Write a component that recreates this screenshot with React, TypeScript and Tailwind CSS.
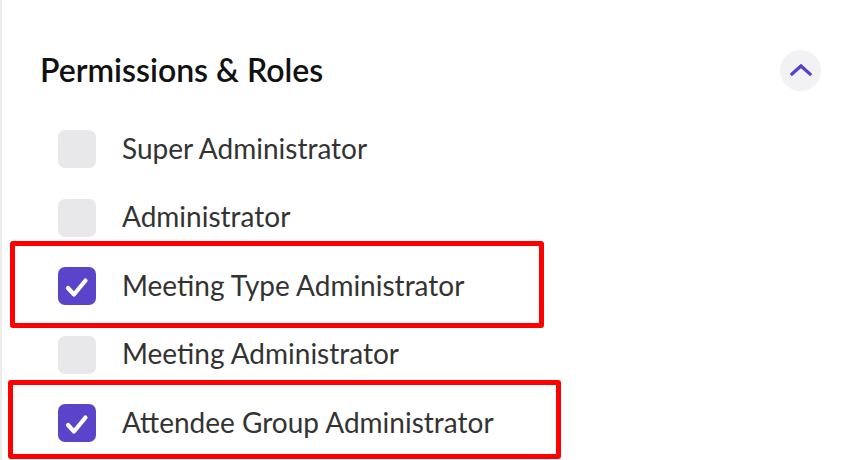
import React from "react";

const roles = [
  { label: "Super Administrator", checked: false },
  { label: "Administrator", checked: false },
  { label: "Meeting Type Administrator", checked: true },
  { label: "Meeting Administrator", checked: false },
  { label: "Attendee Group Administrator", checked: true },
];

function Check() {
  return (
    <svg width="38" height="38" viewBox="0 0 38 38" fill="none">
      <path d="M10 21 L16 27.5 L27.5 13.5" stroke="white" strokeWidth="4.2" strokeLinecap="round" strokeLinejoin="round" />
    </svg>
  );
}

export default function App() {
  return (
    <div
      className="relative w-[857px] h-[460px] overflow-hidden bg-white border-l-2 border-[#ececec]"
      style={{ fontFamily: "Lato, 'Open Sans', sans-serif" }}
    >
      <div className="flex items-center justify-between pl-[38px] pr-[36px] pt-[50px] h-[90px]">
        <h2 className="text-[32px] leading-[40px] font-semibold text-[#111]">Permissions &amp; Roles</h2>
        <button className="w-[41px] h-[41px] rounded-full bg-[#f2f1f4] flex items-center justify-center">
          <svg width="22" height="14" viewBox="0 0 22 14" fill="none">
            <path d="M2 11 L11 3 L20 11" stroke="#5a3fc6" strokeWidth="3.2" strokeLinecap="square" strokeLinejoin="miter" />
          </svg>
        </button>
      </div>
      <div className="flex flex-col gap-[30.5px] pl-[56px] mt-[40px]">
        {roles.map((r) => (
          <div key={r.label} className="flex items-center h-[38px] gap-[26px]">
            <div
              className={
                r.checked
                  ? "w-[38px] h-[38px] rounded-[7px] bg-[#5b44c9]"
                  : "w-[38px] h-[38px] rounded-[7px] bg-[#e8e8eb]"
              }
            >
              {r.checked ? <Check /> : null}
            </div>
            <span className="text-[28px] leading-none text-[#333] -mt-[3px]">{r.label}</span>
          </div>
        ))}
      </div>
      <div className="absolute left-[8px] top-[241px] w-[534px] h-[87px] border-[5px] border-[#ff0000] rounded-[3px]" />
      <div className="absolute left-[6px] top-[380px] w-[553px] h-[79px] border-[5px] border-[#ff0000] rounded-[3px]" />
    </div>
  );
}
